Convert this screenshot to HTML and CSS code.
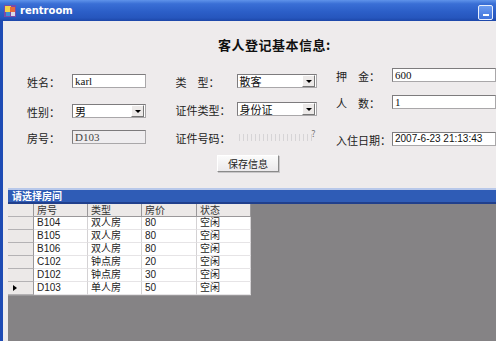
FILE: index.html
```html
<!DOCTYPE html>
<html lang="zh-CN">
  <head>
    <meta charset="UTF-8" />
    <title>rentroom</title>
    <link rel="stylesheet" href="styles.css">
  </head>
  <body>
    <div class="window">
      <div class="titlebar">
        <svg class="app-icon" width="12" height="12" viewBox="0 0 12 12">
          <rect x="0" y="0" width="12" height="12" fill="#7b4aa8" />
          <rect x="1" y="1" width="6" height="6" fill="#f2d24a" />
          <rect x="6" y="2" width="5" height="5" fill="#e86a3a" />
          <rect x="2" y="7" width="4" height="4" fill="#3f8fd8" />
          <rect x="7" y="7" width="4" height="4" fill="#d8d8e8" />
        </svg>
        <span class="title">rentroom</span>
        <span class="min-btn"><span class="min-bar"></span></span>
      </div>

      <div class="client">
        <h1 class="heading">客人登记基本信息:</h1>

        <div class="fields">
          <div class="col col-1">
            <div class="field f-a">
              <label>姓名：</label>
              <div class="textbox">karl</div>
            </div>
            <div class="field f-b">
              <label>性别：</label>
              <div class="combo">男<span class="arrow"></span></div>
            </div>
            <div class="field f-c">
              <label>房号：</label>
              <div class="textbox readonly">D103</div>
            </div>
          </div>

          <div class="col col-2">
            <div class="field f-a">
              <label>类　型：</label>
              <div class="combo">散客<span class="arrow"></span></div>
            </div>
            <div class="field f-d">
              <label>证件类型：</label>
              <div class="combo">身份证<span class="arrow"></span></div>
            </div>
            <div class="field f-d">
              <label>证件号码：</label>
              <div class="masked"><span class="prompt">?</span></div>
            </div>
          </div>

          <div class="col col-3">
            <div class="field f-e">
              <label>押　金：</label>
              <div class="textbox wide">600</div>
            </div>
            <div class="field f-f">
              <label>人　数：</label>
              <div class="textbox wide">1</div>
            </div>
            <div class="field f-g">
              <label>入住日期：</label>
              <div class="textbox wide date">2007-6-23 21:13:43</div>
            </div>
          </div>
        </div>

        <div class="actions">
          <button class="save">保存信息</button>
        </div>

        <div class="rooms">
          <div class="rooms-caption">请选择房间</div>
          <div class="grid-area">
            <div class="grid">
              <div class="rh hd"></div>
              <div class="ch">房号</div>
              <div class="ch">类型</div>
              <div class="ch">房价</div>
              <div class="ch">状态</div>

              <div class="rh"></div>
              <div class="cell">B104</div>
              <div class="cell">双人房</div>
              <div class="cell">80</div>
              <div class="cell">空闲</div>

              <div class="rh"></div>
              <div class="cell">B105</div>
              <div class="cell">双人房</div>
              <div class="cell">80</div>
              <div class="cell">空闲</div>

              <div class="rh"></div>
              <div class="cell">B106</div>
              <div class="cell">双人房</div>
              <div class="cell">80</div>
              <div class="cell">空闲</div>

              <div class="rh"></div>
              <div class="cell">C102</div>
              <div class="cell">钟点房</div>
              <div class="cell">20</div>
              <div class="cell">空闲</div>

              <div class="rh"></div>
              <div class="cell">D102</div>
              <div class="cell">钟点房</div>
              <div class="cell">30</div>
              <div class="cell">空闲</div>

              <div class="rh current"><span class="pointer"></span></div>
              <div class="cell">D103</div>
              <div class="cell">单人房</div>
              <div class="cell">50</div>
              <div class="cell">空闲</div>
            </div>
          </div>
        </div>
      </div>
    </div>
  </body>
</html>
```

FILE: styles.css
```css
body {
  margin: 0;
  width: 496px;
  height: 341px;
  overflow: hidden;
  font-family: "Noto Sans CJK SC", "Liberation Sans", sans-serif;
  font-size: 11px;
  color: #111;
}

.window {
  display: flex;
  flex-direction: column;
  height: 341px;
}

/* title bar */
.titlebar {
  height: 21px;
  display: flex;
  align-items: center;
  padding-left: 4px;
  background: linear-gradient(#5f93ea 0%, #3a6fd6 18%, #2c5fc8 55%, #2656bd 85%, #1c46a8 100%);
}

.app-icon {
  margin-right: 4px;
}

.title {
  font-family: "DejaVu Sans", sans-serif;
  font-weight: bold;
  font-size: 10px;
  color: #fff;
  flex: 1;
}

.min-btn {
  width: 13px;
  height: 13px;
  margin-right: 3px;
  margin-top: 4px;
  border: 1px solid #e8eefc;
  border-radius: 2px;
  background: linear-gradient(#6c9cf0, #3f72dc);
  display: flex;
  align-items: flex-end;
  justify-content: center;
}

.min-bar {
  width: 6px;
  height: 2px;
  background: #fff;
  margin-bottom: 3px;
}

/* client area */
.client {
  flex: 1;
  display: flex;
  flex-direction: column;
  background: #eeebec;
  border-left: 3px solid #1e4bb4;
}

.heading {
  margin: 0;
  padding: 16px 0 0 215px;
  height: 16px;
  line-height: 16px;
  font-size: 13px;
  font-weight: bold;
  letter-spacing: 0.5px;
}

.fields {
  display: flex;
  padding-left: 24px;
}

.col {
  display: flex;
  flex-direction: column;
}

.col-1 { width: 150px; }
.col-2 { width: 162px; }
.col-3 { flex: 1; }

.field {
  display: flex;
  align-items: center;
  height: 14px;
}

.f-a { margin-top: 21px; }
.f-b { margin-top: 16px; }
.f-c { margin-top: 12px; }
.f-d { margin-top: 14px; }
.f-e { margin-top: 15px; }
.f-f { margin-top: 13px; }
.f-g { margin-top: 23px; }

.col-1 label { width: 45px; }
.col-2 label { width: 61px; }
.col-3 label { width: 56px; }

label {
  font-size: 11px;
  line-height: 14px;
  padding-top: 2px;
  color: #222;
}

.textbox,
.combo {
  box-sizing: border-box;
  height: 14px;
  width: 74px;
  background: #fff;
  border: 1px solid #a9a7a9;
  border-top-color: #7d7b7d;
  border-left-color: #7d7b7d;
  font-family: "Liberation Serif", "Noto Sans CJK SC", serif;
  font-size: 11px;
  line-height: 12px;
  padding-left: 2px;
  position: relative;
}

.col-2 .combo {
  width: 80px;
}

.textbox.readonly {
  background: #efedef;
  color: #444;
}

.textbox.wide {
  width: 104px;
}

.textbox.date {
  font-family: "Liberation Sans", sans-serif;
  font-size: 10px;
}

.combo {
  font-family: "Noto Sans CJK SC", sans-serif;
}

.arrow {
  position: absolute;
  right: 1px;
  top: 0;
  width: 11px;
  height: 10px;
  background: #ece9e8;
  border: 1px solid;
  border-color: #fff #777 #777 #fff;
}

.arrow::after {
  content: "";
  position: absolute;
  left: 3px;
  top: 4px;
  border-left: 3px solid transparent;
  border-right: 3px solid transparent;
  border-top: 3px solid #000;
}

.masked {
  width: 80px;
  height: 14px;
  position: relative;
  background: repeating-linear-gradient(90deg, #d6d4d6 0 1px, transparent 1px 4px) 2px 4px / 74px 7px no-repeat;
}

.prompt {
  position: absolute;
  right: 1px;
  top: -3px;
  font-size: 9px;
  color: #777;
}

.actions {
  padding: 9px 0 0 214px;
}

.save {
  width: 62px;
  height: 17px;
  padding: 0;
  font-family: "Noto Sans CJK SC", sans-serif;
  font-size: 10px;
  line-height: 15px;
  background: linear-gradient(#fbfbfb, #ebe9eb);
  border: 1px solid;
  border-color: #fff #8a8a8a #8a8a8a #fff;
  box-shadow: 1px 1px 0 #c8c6c8;
  color: #222;
}

/* rooms grid */
.rooms {
  margin-top: 16px;
  margin-left: 5px;
  flex: 1;
  display: flex;
  flex-direction: column;
}

.rooms-caption {
  height: 12px;
  line-height: 12px;
  padding-left: 4px;
  background: #2f5cb6;
  border-top: 2px solid #b8c8ea;
  border-bottom: 2px solid #203f8c;
  color: #fff;
  font-weight: bold;
  font-size: 10px;
}

.grid-area {
  flex: 1;
  background: #858385;
}

.grid {
  display: grid;
  grid-template-columns: 26px 54px 54px 55px 54px;
  grid-auto-rows: 13px;
  width: 243px;
  background: #fff;
  border-bottom: 1px solid #9a989a;
}

.grid > div {
  box-sizing: border-box;
  font-size: 10px;
  line-height: 12px;
  padding-left: 3px;
  white-space: nowrap;
}

.rh {
  background: #ece9e8;
  border-right: 1px solid #9a989a;
  border-bottom: 1px solid #b4b2b4;
  position: relative;
}

.ch {
  background: #ece9e8;
  border-right: 1px solid #9a989a;
  border-bottom: 1px solid #9a989a;
  color: #333;
}

.cell {
  border-right: 1px solid #d4d2d4;
  border-bottom: 1px solid #e6e4e6;
  color: #222;
  font-family: "Liberation Sans", "Noto Sans CJK SC", sans-serif;
}

.pointer {
  position: absolute;
  left: 5px;
  top: 3px;
  border-top: 3px solid transparent;
  border-bottom: 3px solid transparent;
  border-left: 4px solid #000;
}
```
